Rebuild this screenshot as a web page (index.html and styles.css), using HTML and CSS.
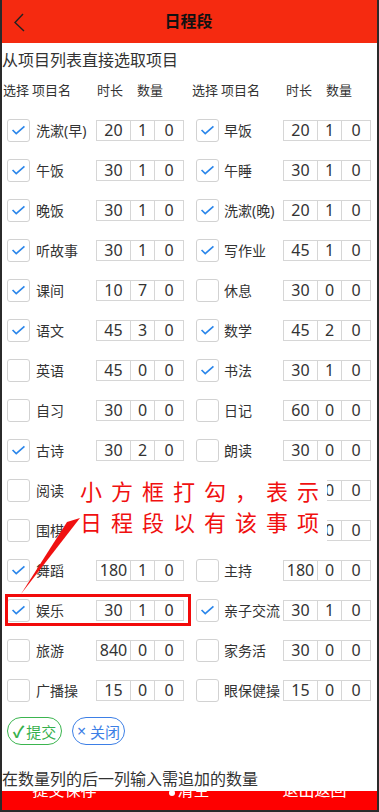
FILE: index.html
```html
<!DOCTYPE HTML>
<html>
	<head>
		<meta charset="utf-8">
		<title>日程段</title>
		<link rel="stylesheet" href="styles.css">
	</head>
	<body>
		<div class="page">
			<div class="header">
				<div class="back">
					<svg width="16" height="20" viewBox="0 0 16 20"><polyline points="10,2 2,10.5 11,19" fill="none" stroke="#222" stroke-width="1.4"/></svg>
				</div>
				<div class="title">日程段</div>
				<div></div>
			</div>
			<div class="subtitle">从项目列表直接选取项目</div>
			<div class="heads">
				<div class="head-half"><span class="h-sel">选择</span><span class="h-name">项目名</span><span class="h-time">时长</span><span>数量</span></div>
				<div class="head-half"><span class="h-sel">选择</span><span class="h-name">项目名</span><span class="h-time">时长</span><span>数量</span></div>
			</div>
			<div class="grid">
				<div class="cell"><span class="check on"><svg viewBox="0 0 23 23"><polyline points="5,11 9,15 18,7"/></svg></span><span class="name">洗漱(早)</span><span class="box b1">20</span><span class="box b2">1</span><span class="box b3">0</span></div>
				<div class="cell"><span class="check on"><svg viewBox="0 0 23 23"><polyline points="5,11 9,15 18,7"/></svg></span><span class="name">早饭</span><span class="box b1">20</span><span class="box b2">1</span><span class="box b3">0</span></div>

				<div class="cell"><span class="check on"><svg viewBox="0 0 23 23"><polyline points="5,11 9,15 18,7"/></svg></span><span class="name">午饭</span><span class="box b1">30</span><span class="box b2">1</span><span class="box b3">0</span></div>
				<div class="cell"><span class="check on"><svg viewBox="0 0 23 23"><polyline points="5,11 9,15 18,7"/></svg></span><span class="name">午睡</span><span class="box b1">30</span><span class="box b2">1</span><span class="box b3">0</span></div>

				<div class="cell"><span class="check on"><svg viewBox="0 0 23 23"><polyline points="5,11 9,15 18,7"/></svg></span><span class="name">晚饭</span><span class="box b1">30</span><span class="box b2">1</span><span class="box b3">0</span></div>
				<div class="cell"><span class="check on"><svg viewBox="0 0 23 23"><polyline points="5,11 9,15 18,7"/></svg></span><span class="name">洗漱(晚)</span><span class="box b1">20</span><span class="box b2">1</span><span class="box b3">0</span></div>

				<div class="cell"><span class="check on"><svg viewBox="0 0 23 23"><polyline points="5,11 9,15 18,7"/></svg></span><span class="name">听故事</span><span class="box b1">30</span><span class="box b2">1</span><span class="box b3">0</span></div>
				<div class="cell"><span class="check on"><svg viewBox="0 0 23 23"><polyline points="5,11 9,15 18,7"/></svg></span><span class="name">写作业</span><span class="box b1">45</span><span class="box b2">1</span><span class="box b3">0</span></div>

				<div class="cell"><span class="check on"><svg viewBox="0 0 23 23"><polyline points="5,11 9,15 18,7"/></svg></span><span class="name">课间</span><span class="box b1">10</span><span class="box b2">7</span><span class="box b3">0</span></div>
				<div class="cell"><span class="check"></span><span class="name">休息</span><span class="box b1">30</span><span class="box b2">0</span><span class="box b3">0</span></div>

				<div class="cell"><span class="check on"><svg viewBox="0 0 23 23"><polyline points="5,11 9,15 18,7"/></svg></span><span class="name">语文</span><span class="box b1">45</span><span class="box b2">3</span><span class="box b3">0</span></div>
				<div class="cell"><span class="check on"><svg viewBox="0 0 23 23"><polyline points="5,11 9,15 18,7"/></svg></span><span class="name">数学</span><span class="box b1">45</span><span class="box b2">2</span><span class="box b3">0</span></div>

				<div class="cell"><span class="check"></span><span class="name">英语</span><span class="box b1">45</span><span class="box b2">0</span><span class="box b3">0</span></div>
				<div class="cell"><span class="check on"><svg viewBox="0 0 23 23"><polyline points="5,11 9,15 18,7"/></svg></span><span class="name">书法</span><span class="box b1">30</span><span class="box b2">1</span><span class="box b3">0</span></div>

				<div class="cell"><span class="check"></span><span class="name">自习</span><span class="box b1">30</span><span class="box b2">0</span><span class="box b3">0</span></div>
				<div class="cell"><span class="check"></span><span class="name">日记</span><span class="box b1">60</span><span class="box b2">0</span><span class="box b3">0</span></div>

				<div class="cell"><span class="check on"><svg viewBox="0 0 23 23"><polyline points="5,11 9,15 18,7"/></svg></span><span class="name">古诗</span><span class="box b1">30</span><span class="box b2">2</span><span class="box b3">0</span></div>
				<div class="cell"><span class="check"></span><span class="name">朗读</span><span class="box b1">30</span><span class="box b2">0</span><span class="box b3">0</span></div>

				<div class="cell"><span class="check"></span><span class="name">阅读</span><span class="box b1">30</span><span class="box b2">0</span><span class="box b3">0</span></div>
				<div class="cell"><span class="check"></span><span class="name">唱歌</span><span class="box b1">30</span><span class="box b2">0</span><span class="box b3">0</span></div>

				<div class="cell"><span class="check"></span><span class="name">围棋</span><span class="box b1">60</span><span class="box b2">0</span><span class="box b3">0</span></div>
				<div class="cell"><span class="check"></span><span class="name">画画</span><span class="box b1">30</span><span class="box b2">0</span><span class="box b3">0</span></div>

				<div class="cell"><span class="check on"><svg viewBox="0 0 23 23"><polyline points="5,11 9,15 18,7"/></svg></span><span class="name">舞蹈</span><span class="box b1">180</span><span class="box b2">1</span><span class="box b3">0</span></div>
				<div class="cell"><span class="check"></span><span class="name">主持</span><span class="box b1">180</span><span class="box b2">0</span><span class="box b3">0</span></div>

				<div class="cell"><span class="check on"><svg viewBox="0 0 23 23"><polyline points="5,11 9,15 18,7"/></svg></span><span class="name">娱乐</span><span class="box b1">30</span><span class="box b2">1</span><span class="box b3">0</span></div>
				<div class="cell"><span class="check on"><svg viewBox="0 0 23 23"><polyline points="5,11 9,15 18,7"/></svg></span><span class="name">亲子交流</span><span class="box b1">30</span><span class="box b2">1</span><span class="box b3">0</span></div>

				<div class="cell"><span class="check"></span><span class="name">旅游</span><span class="box b1">840</span><span class="box b2">0</span><span class="box b3">0</span></div>
				<div class="cell"><span class="check"></span><span class="name">家务活</span><span class="box b1">30</span><span class="box b2">0</span><span class="box b3">0</span></div>

				<div class="cell"><span class="check"></span><span class="name">广播操</span><span class="box b1">15</span><span class="box b2">0</span><span class="box b3">0</span></div>
				<div class="cell"><span class="check"></span><span class="name">眼保健操</span><span class="box b1">15</span><span class="box b2">0</span><span class="box b3">0</span></div>
			</div>
			<div class="buttons">
				<span class="pill ok"><b>✓</b>提交</span>
				<span class="pill close"><i>×</i>关闭</span>
			</div>
			<div class="tip">在数量列的后一列输入需追加的数量</div>
			<div class="bar">
				<span>提交保存</span>
				<span><em></em>清空</span>
				<span>退出返回</span>
			</div>

			<!-- annotation drawn over the list -->
			<div class="note">小方框打勾，表示<br>日程段以有该事项</div>
			<svg class="arrow" width="379" height="812" viewBox="0 0 379 812"><polygon points="67,522 80,518 21,594" fill="#f01010"/></svg>
			<div class="mark"></div>
		</div>
	</body>
</html>
```

FILE: styles.css
```css
body {
	margin: 0;
	background: #fff;
	font-family: "Noto Sans", "Noto Sans CJK SC", sans-serif;
	color: #333;
}
.page {
	position: relative;
	width: 379px;
	height: 812px;
	box-sizing: border-box;
	border-left: 2px solid #2a2a2a;
	border-right: 2px solid #2a2a2a;
	border-bottom: 2px solid #2a2a2a;
	overflow: hidden;
}
.header {
	display: grid;
	grid-template-columns: 40px 1fr 40px;
	height: 43px;
	margin-left: -2px;
	background: #f52a10;
}
.back {
	display: flex;
	align-items: center;
	padding-left: 13px;
}
.back svg {
	display: block;
}
.title {
	text-align: center;
	line-height: 43px;
	font-size: 16px;
	font-weight: bold;
	color: #111;
}
.subtitle {
	margin-top: 5px;
	line-height: 24px;
	font-size: 16px;
	color: #333;
}
.heads {
	display: grid;
	grid-template-columns: 189px 186px;
	margin-top: 6px;
	line-height: 24px;
	font-size: 13px;
}
.head-half {
	display: flex;
	padding-left: 1px;
}
.head-half span {
	white-space: nowrap;
}
.h-sel {
	width: 29px;
}
.h-name {
	width: 65px;
}
.h-time {
	width: 40px;
}
.grid {
	display: grid;
	grid-template-columns: 189px 186px;
	grid-auto-rows: 40px;
	margin-top: 8px;
}
.cell {
	display: flex;
	align-items: center;
	padding-left: 5px;
}
.check {
	width: 23px;
	height: 23px;
	box-sizing: border-box;
	border: 1px solid #d2d2d2;
	border-radius: 3px;
	flex: none;
}
.check svg {
	display: block;
	width: 21px;
	height: 21px;
	margin: 0;
}
.check polyline {
	fill: none;
	stroke: #2b86ea;
	stroke-width: 1.8;
}
.name {
	width: 60px;
	margin-left: 6px;
	font-size: 14px;
	white-space: nowrap;
	color: #333;
}
.cell:nth-child(2n) .name {
	width: 59px;
	margin-left: 5px;
}
.box {
	height: 21px;
	box-sizing: border-box;
	border: 1px solid #d6d6d6;
	line-height: 19px;
	text-align: center;
	font-size: 16px;
	color: #333;
	flex: none;
}
.b1 {
	width: 35px;
}
.b2 {
	width: 25px;
	margin-left: -1px;
}
.b3 {
	width: 30px;
	margin-left: -1px;
}
.buttons {
	display: flex;
	gap: 10px;
	margin-top: 7px;
	padding-left: 5px;
}
.pill {
	display: flex;
	align-items: center;
	justify-content: center;
	height: 28px;
	box-sizing: border-box;
	border-radius: 14px;
	font-size: 15px;
}
.pill.ok {
	width: 55px;
	border: 1px solid #3bb54f;
	color: #35b04c;
}
.pill.ok b {
	margin-right: 2px;
	font-size: 16px;
}
.pill.close {
	width: 53px;
	border: 1px solid #3d7fe6;
	color: #3d7fe6;
}
.pill.close i {
	font-style: normal;
	margin-right: 4px;
	font-size: 16px;
}
.tip {
	margin-top: 22px;
	line-height: 24px;
	font-size: 16px;
	color: #333;
	position: relative;
	z-index: 1;
	background: #fff;
}
.bar {
	display: flex;
	height: 19px;
	overflow: hidden;
	background: #fe0000;
}
.bar span {
	flex: 1;
	margin-top: -11px;
	line-height: 20px;
	text-align: center;
	font-size: 16px;
	color: #fff;
}
.bar em {
	display: inline-block;
	width: 6px;
	height: 6px;
	margin-right: 2px;
	border-radius: 50%;
	background: #fff;
}
.note {
	position: absolute;
	left: 74px;
	top: 466px;
	width: 251px;
	height: 82px;
	box-sizing: border-box;
	padding: 10px 0 0 4px;
	background: #fff;
	line-height: 31px;
	font-size: 22px;
	letter-spacing: 9px;
	white-space: nowrap;
	color: #f01010;
}
.arrow {
	position: absolute;
	left: -2px;
	top: 0;
	pointer-events: none;
}
.mark {
	position: absolute;
	left: 3px;
	top: 594px;
	width: 186px;
	height: 32px;
	box-sizing: border-box;
	border: 3px solid #f20a0a;
}
```
